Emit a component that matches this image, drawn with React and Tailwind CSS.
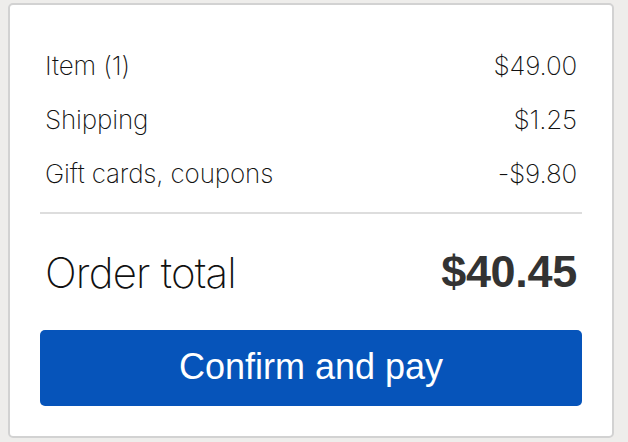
import React from "react";

const rows = [
  ["Item (1)", "$49.00"],
  ["Shipping", "$1.25"],
  ["Gift cards, coupons", "-$9.80"],
];

export default function App() {
  return (
    <div className="w-[628px] h-[442px] bg-[#eeedeb] pt-[3px] pl-[8px] overflow-hidden" style={{ fontFamily: "Inter, 'Liberation Sans', sans-serif" }}>
      <div className="w-[606px] h-[435px] bg-white border-2 border-[#d2d2d2] rounded-[5px] px-[30px] pt-[33px] text-[#333]">
        <div className="flex flex-col">
          {rows.map(([l, r]) => (
            <div key={l} className="flex justify-between items-center h-[54px] px-[5px] text-[26px] font-extralight tracking-[-0.15px] text-[#111]">
              <span>{l}</span>
              <span>{r}</span>
            </div>
          ))}
        </div>
        <div className="h-[2px] bg-[#dddddd] mt-[12px]" />
        <div className="flex justify-between items-center h-[116px] px-[5px]">
          <span className="text-[42px] font-extralight tracking-[-0.8px] text-[#111]">Order total</span>
          <span className="text-[45px] font-bold font-['Liberation_Sans'] tracking-[-0.3px]">$40.45</span>
        </div>
        <button className="w-full h-[76px] bg-[#0654ba] rounded-[5px] text-white text-[36px] font-['Liberation_Sans'] pb-[2px]">
          Confirm and pay
        </button>
      </div>
    </div>
  );
}
